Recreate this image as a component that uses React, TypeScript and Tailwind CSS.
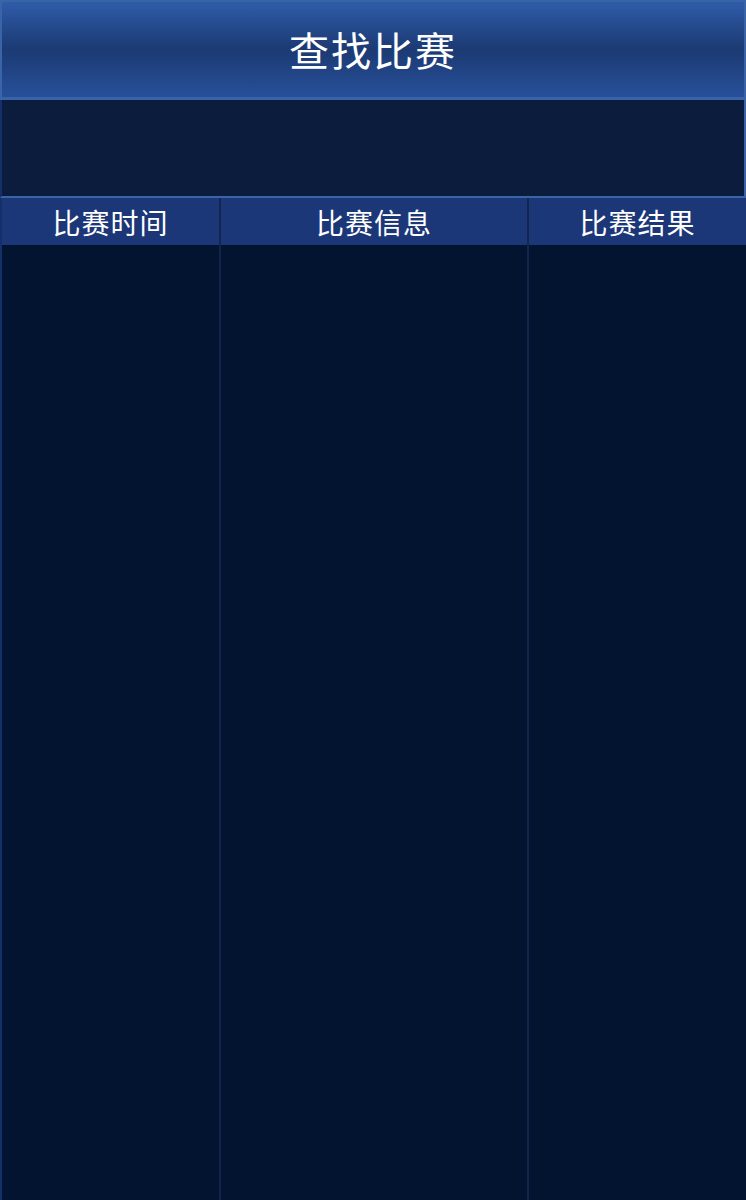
import React from "react";

const cols = [
  { label: "比赛时间", w: "w-[217px]" },
  { label: "比赛信息", w: "w-[308px]" },
  { label: "比赛结果", w: "flex-1" },
];

export default function App() {
  return (
    <div
      className="w-[746px] h-[1200px] flex flex-col bg-[#021430] overflow-hidden"
      style={{ fontFamily: '"Noto Sans CJK SC", "Noto Sans", sans-serif' }}
    >
      <div className="h-[100px] border-t-2 border-x-2 border-b-[3px] border-[#3a64a8] bg-gradient-to-b from-[#2f5ca9] via-[#1c3a73] to-[#27509a] flex items-center justify-center">
        <h1 className="text-white text-[40px] leading-none tracking-[2px] -mt-[2px]">查找比赛</h1>
      </div>
      <div className="h-[98px] bg-[#0c1c3c] border-x-2 border-b-2 border-l-[#14306a] border-r-[#3a64a8] border-b-[#3a64a8]" />
      <div className="flex h-[47px] bg-[#1c3778] border-l-2 border-[#14306a]">
        {cols.map((c, i) => (
          <div
            key={c.label}
            className={`${c.w} flex items-center justify-center text-white text-[28px] leading-none tracking-[1px] ${i > 0 ? "border-l-2 border-[#142650]" : ""}`}
          >
            {c.label}
          </div>
        ))}
      </div>
      <div className="flex flex-1 border-l-2 border-[#14306a]">
        {cols.map((c, i) => (
          <div
            key={c.label}
            className={`${c.w} ${i > 0 ? "border-l-2 border-[#10244c]" : ""}`}
          />
        ))}
      </div>
    </div>
  );
}
